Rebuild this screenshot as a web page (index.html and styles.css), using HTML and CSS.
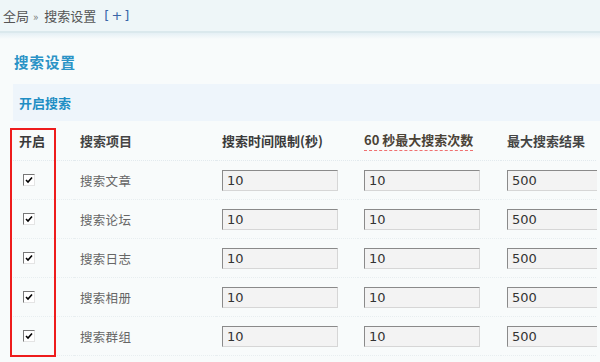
FILE: index.html
```html
<!DOCTYPE html>
<html lang="zh-CN">
<head>
<meta charset="utf-8">
<link rel="stylesheet" href="styles.css">
</head>
<body>
<div class="crumb">
  <span>全局</span><span class="sep">»</span><span>搜索设置</span><a class="plus">[+]</a>
</div>
<div class="main">
  <h1 class="title">搜索设置</h1>
  <div class="band">开启搜索</div>
  <div class="tablewrap">
    <div class="grid">
      <div class="th">开启</div>
      <div class="th th-n">搜索项目</div>
      <div class="th">搜索时间限制(秒)</div>
      <div class="th"><span class="tip">60 秒最大搜索次数</span></div>
      <div class="th th-n">最大搜索结果</div>

      <div class="td"><span class="cb"><svg viewBox="0 0 8 8"><path d="M1 4 L3 6 L7 1.5" fill="none" stroke="#000" stroke-width="1.6"/></svg></span></div>
      <div class="td label">搜索文章</div>
      <div class="td"><span class="inp">10</span></div>
      <div class="td"><span class="inp">10</span></div>
      <div class="td"><span class="inp">500</span></div>

      <div class="td"><span class="cb"><svg viewBox="0 0 8 8"><path d="M1 4 L3 6 L7 1.5" fill="none" stroke="#000" stroke-width="1.6"/></svg></span></div>
      <div class="td label">搜索论坛</div>
      <div class="td"><span class="inp">10</span></div>
      <div class="td"><span class="inp">10</span></div>
      <div class="td"><span class="inp">500</span></div>

      <div class="td"><span class="cb"><svg viewBox="0 0 8 8"><path d="M1 4 L3 6 L7 1.5" fill="none" stroke="#000" stroke-width="1.6"/></svg></span></div>
      <div class="td label">搜索日志</div>
      <div class="td"><span class="inp">10</span></div>
      <div class="td"><span class="inp">10</span></div>
      <div class="td"><span class="inp">500</span></div>

      <div class="td"><span class="cb"><svg viewBox="0 0 8 8"><path d="M1 4 L3 6 L7 1.5" fill="none" stroke="#000" stroke-width="1.6"/></svg></span></div>
      <div class="td label">搜索相册</div>
      <div class="td"><span class="inp">10</span></div>
      <div class="td"><span class="inp">10</span></div>
      <div class="td"><span class="inp">500</span></div>

      <div class="td"><span class="cb"><svg viewBox="0 0 8 8"><path d="M1 4 L3 6 L7 1.5" fill="none" stroke="#000" stroke-width="1.6"/></svg></span></div>
      <div class="td label">搜索群组</div>
      <div class="td"><span class="inp">10</span></div>
      <div class="td"><span class="inp">10</span></div>
      <div class="td"><span class="inp">500</span></div>
    </div>
    <div class="mark"></div>
  </div>
</div>
</body>
</html>
```
FILE: styles.css
```css
html, body {
  margin: 0;
  padding: 0;
  width: 600px;
  height: 362px;
  overflow: hidden;
  background: #f8fbfb;
  font-family: "Noto Sans CJK SC", "DejaVu Sans", sans-serif;
}
.crumb {
  height: 31px;
  background: #eef6f8;
  border-bottom: 2px solid #dbe9ed;
  display: flex;
  align-items: center;
  padding-left: 3px;
  font-size: 13px;
  color: #555;
}
.crumb .sep {
  margin: 0 6px 0 4px;
  font-size: 11px;
  color: #777;
}
.crumb .plus {
  margin-left: 8px;
  color: #3a66a8;
  font-family: "DejaVu Sans", sans-serif;
  font-size: 13px;
  letter-spacing: 2px;
}
.main {
  background: linear-gradient(#e5f0f5 0, #f8fbfb 6px);
  padding-top: 18px;
}
.title {
  margin: 0 0 11px 14px;
  font-size: 14.5px;
  font-weight: bold;
  color: #2b93c6;
  line-height: 22px;
  letter-spacing: 1px;
}
.band {
  margin-left: 13px;
  height: 37px;
  background: #eef5fb;
  display: flex;
  align-items: center;
  padding-left: 6px;
  font-size: 13px;
  font-weight: bold;
  color: #1f8ec4;
}
.tablewrap {
  position: relative;
  margin-left: 13px;
  width: 584px;
}
.grid {
  display: grid;
  grid-template-columns: 61px 142px 142px 143px 143px;
  overflow: hidden;
}
.th, .td {
  padding-left: 6px;
  display: flex;
  align-items: center;
}
.th {
  height: 38px;
  padding-bottom: 1px;
  font-size: 13px;
  font-weight: bold;
  color: #3a3a3a;
  border-bottom: 1px dotted #e2eaee;
}
.th-n {
  font-weight: 600;
  color: #444;
}
.tip {
  border-bottom: 1px dashed #f07070;
  padding-bottom: 1px;
  color: #4a4236;
}
.td {
  height: 38px;
  border-bottom: 1px dotted #e8eef0;
}
.label {
  font-size: 12.5px;
  color: #666;
  letter-spacing: 0.3px;
}
.cb {
  margin-left: 4px;
  width: 10px;
  height: 10px;
  border-top: 1px solid #777;
  border-left: 1px solid #777;
  border-right: 1px solid #e4e4e4;
  border-bottom: 1px solid #e4e4e4;
  background: #fff;
  display: flex;
  align-items: center;
  justify-content: center;
}
.cb svg {
  width: 8px;
  height: 8px;
}
.inp {
  width: 110px;
  height: 19px;
  border-top: 1px solid #8a8a8a;
  border-left: 1px solid #8a8a8a;
  border-right: 1px solid #d6d6d6;
  border-bottom: 1px solid #d6d6d6;
  background: #f3f3f3;
  padding-left: 4px;
  font-family: "DejaVu Sans", sans-serif;
  font-size: 13px;
  color: #333;
  line-height: 19px;
  flex: none;
}
.mark {
  position: absolute;
  left: -3px;
  top: 7px;
  width: 42px;
  height: 225px;
  border: 2px solid #ee1c1c;
}
```
